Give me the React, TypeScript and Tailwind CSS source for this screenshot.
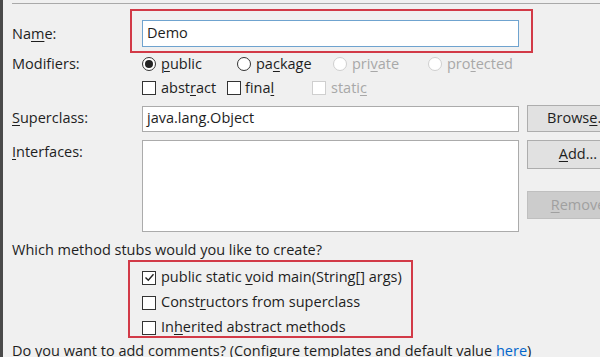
import React from 'react';

// Mnemonic label: underlines one letter, like SWT accelerators
const Mn: React.FC<{ text: string; at: number }> = ({ text, at }) => (
  <span>
    {text.slice(0, at)}
    <span className="underline underline-offset-2 decoration-1">{text[at]}</span>
    {text.slice(at + 1)}
  </span>
);

const Radio: React.FC<{ checked?: boolean; disabled?: boolean }> = ({ checked, disabled }) => (
  <span
    className={`w-[14px] h-[14px] rounded-full border bg-white flex items-center justify-center shrink-0 ${
      disabled ? 'border-[#cfcfcf]' : 'border-[#333]'
    }`}
  >
    {checked && <span className="w-[8px] h-[8px] rounded-full bg-[#222]" />}
  </span>
);

const Check: React.FC<{ checked?: boolean; disabled?: boolean }> = ({ checked, disabled }) => (
  <span
    className={`w-[14px] h-[14px] border bg-white flex items-center justify-center shrink-0 ${
      disabled ? 'border-[#cfcfcf]' : 'border-[#333]'
    }`}
  >
    {checked && (
      <svg width="11" height="11" viewBox="0 0 11 11" fill="none">
        <path d="M1.5 5.5 L4.3 8.3 L9.5 2.2" stroke="#222" strokeWidth="1.4" />
      </svg>
    )}
  </span>
);

const Btn: React.FC<{ children: React.ReactNode; disabled?: boolean; h: string }> = ({ children, disabled, h }) => (
  <div
    className={`w-[102px] ${h} border flex items-center justify-center shrink-0 ${
      disabled ? 'bg-[#cccccc] border-[#bfbfbf] text-[#a0a0a0]' : 'bg-[#e1e1e1] border-[#adadad] text-[#1e1e1e]'
    }`}
  >
    {children}
  </div>
);

export default function App() {
  return (
    <div
      className="relative w-[600px] h-[357px] overflow-hidden bg-[#f0f0f0] border-l-[3px] border-[#4a4a4a] text-[14.5px] text-[#1e1e1e] leading-none"
      style={{ fontFamily: '"Open Sans", "Noto Sans", sans-serif' }}
    >
      <div className="ml-[9px] mt-[3px] h-px bg-[#a9a9a9]" />

      <div className="pl-[9px] flex flex-col w-[800px]">
        {/* Name */}
        <div className="flex items-center mt-[16px] h-[27px]">
          <div className="w-[130px] shrink-0 pt-[2px]"><Mn text="Name:" at={2} /></div>
          <div className="w-[377px] shrink-0 h-[27px] bg-white border border-[#6fa3cf] flex items-center px-[4px]">Demo</div>
        </div>

        {/* Modifiers */}
        <div className="flex items-center mt-[6px] h-[22px]">
          <div className="w-[130px] shrink-0">Modifiers:</div>
          <div className="w-[95px] flex items-center gap-[5px]"><Radio checked /><Mn text="public" at={0} /></div>
          <div className="w-[96px] flex items-center gap-[5px]"><Radio /><Mn text="package" at={2} /></div>
          <div className="w-[95px] flex items-center gap-[5px] text-[#a8a8a8]"><Radio disabled /><Mn text="private" at={3} /></div>
          <div className="flex items-center gap-[5px] text-[#a8a8a8]"><Radio disabled /><Mn text="protected" at={3} /></div>
        </div>

        <div className="flex items-center mt-[2px] h-[22px]">
          <div className="w-[130px] shrink-0" />
          <div className="w-[85px] flex items-center gap-[5px]"><Check /><Mn text="abstract" at={4} /></div>
          <div className="w-[85px] flex items-center gap-[4px]"><Check /><Mn text="final" at={4} /></div>
          <div className="flex items-center gap-[5px] text-[#a8a8a8]"><Check disabled /><Mn text="static" at={5} /></div>
        </div>

        {/* Superclass */}
        <div className="flex items-center mt-[6px] h-[27px]">
          <div className="w-[130px] shrink-0"><Mn text="Superclass:" at={0} /></div>
          <div className="w-[377px] shrink-0 h-[26px] bg-white border border-[#ababab] flex items-center px-[4px]">java.lang.Object</div>
          <div className="ml-[8px]"><Btn h="h-[27px]"><Mn text="Browse..." at={5} /></Btn></div>
        </div>

        {/* Interfaces */}
        <div className="flex items-start mt-[8px]">
          <div className="w-[130px] shrink-0 pt-[5px]"><Mn text="Interfaces:" at={0} /></div>
          <div className="w-[377px] shrink-0 h-[92px] bg-white border border-[#ababab]" />
          <div className="ml-[8px] flex flex-col gap-[22px]">
            <Btn h="h-[29px]"><Mn text="Add..." at={0} /></Btn>
            <Btn h="h-[28px]" disabled><Mn text="Remove" at={0} /></Btn>
          </div>
        </div>

        {/* Method stubs */}
        <div className="flex items-center mt-[7px] h-[22px]">Which method stubs would you like to create?</div>
        <div className="flex flex-col pl-[130px] mt-[4px]">
          <div className="h-[25px] flex items-center gap-[5px]"><Check checked /><span>public static <Mn text="void" at={0} /> main(String[] args)</span></div>
          <div className="h-[25px] flex items-center gap-[5px]"><Check /><Mn text="Constructors from superclass" at={5} /></div>
          <div className="h-[25px] flex items-center gap-[5px]"><Check /><Mn text="Inherited abstract methods" at={2} /></div>
        </div>
        <div className="flex items-center h-[22px]">
          <span>
            Do you want to add comments? (Configure templates and default value{' '}
            <span className="text-[#0066cc] underline underline-offset-2">here</span>)
          </span>
        </div>
      </div>

      {/* red annotation boxes */}
      <div className="absolute left-[127px] top-[9px] w-[403px] h-[44px] border-2 border-[#d23a47]" />
      <div className="absolute left-[125px] top-[260px] w-[285px] h-[78px] border-2 border-[#d23a47]" />
    </div>
  );
}
